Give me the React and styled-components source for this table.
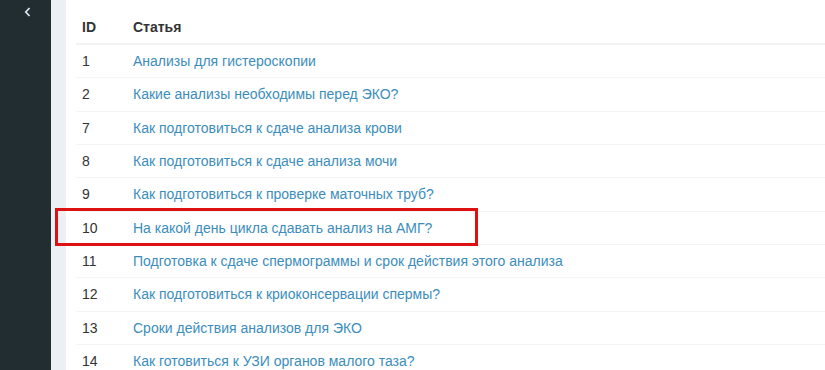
import React from 'react';
import styled, { createGlobalStyle } from 'styled-components';

const GlobalStyle = createGlobalStyle`
  html, body {
    margin: 0;
    padding: 0;
    background: #ffffff;
  }
  body {
    font-family: "Liberation Sans", Arial, sans-serif;
    font-size: 14px;
    color: #333;
  }
`;

const Layout = styled.div`
  display: flex;
  height: 370px;
  overflow: hidden;
`;

const Sidebar = styled.aside`
  width: 51px;
  flex-shrink: 0;
  background: #222d32;
  display: flex;
  justify-content: flex-end;
  padding: 7px 20px 0 0;
  box-sizing: border-box;

  svg {
    display: block;
  }
`;

const Gutter = styled.div`
  width: 15px;
  flex-shrink: 0;
  background: #ecf0f5;
`;

const Main = styled.main`
  flex: 1;
  background: #ffffff;
  padding: 11px 0 0 10px;
  position: relative;
`;

const Table = styled.div`
  display: flex;
  flex-direction: column;
`;

const Row = styled.div`
  display: grid;
  grid-template-columns: 51px 1fr;
  align-items: center;
  height: 33.333px;
  box-sizing: border-box;
  border-bottom: 1px solid #f4f4f4;
  position: relative;
`;

const HeadRow = styled(Row)`
  height: 34px;
  border-bottom: 2px solid #f4f4f4;
  font-weight: bold;
`;

const Cell = styled.div`
  padding-left: 6px;
  line-height: 20px;
  white-space: nowrap;
`;

const Link = styled.a`
  color: #3c8dbc;
  text-decoration: none;
`;

const Highlight = styled.div`
  position: absolute;
  left: -21px;
  top: -4px;
  width: 423px;
  height: 38px;
  box-sizing: border-box;
  border: 3px solid #dd1111;
  pointer-events: none;
`;

const articles = [
  { id: 1, title: 'Анализы для гистероскопии' },
  { id: 2, title: 'Какие анализы необходимы перед ЭКО?' },
  { id: 7, title: 'Как подготовиться к сдаче анализа крови' },
  { id: 8, title: 'Как подготовиться к сдаче анализа мочи' },
  { id: 9, title: 'Как подготовиться к проверке маточных труб?' },
  { id: 10, title: 'На какой день цикла сдавать анализ на АМГ?', marked: true },
  { id: 11, title: 'Подготовка к сдаче спермограммы и срок действия этого анализа' },
  { id: 12, title: 'Как подготовиться к криоконсервации спермы?' },
  { id: 13, title: 'Сроки действия анализов для ЭКО' },
  { id: 14, title: 'Как готовиться к УЗИ органов малого таза?' },
];

const App = () => {
  return (
    <>
      <GlobalStyle />
      <Layout>
        <Sidebar>
          <svg width="7" height="10" viewBox="0 0 7 10">
            <path d="M5.5 1 L1.8 5 L5.5 9" fill="none" stroke="#d6e4ee" strokeWidth="1.8" />
          </svg>
        </Sidebar>
        <Gutter />
        <Main>
          <Table>
            <HeadRow>
              <Cell>ID</Cell>
              <Cell>Статья</Cell>
            </HeadRow>
            {articles.map((a) => (
              <Row key={a.id}>
                <Cell>{a.id}</Cell>
                <Cell>
                  <Link href="#">{a.title}</Link>
                </Cell>
                {a.marked && <Highlight />}
              </Row>
            ))}
          </Table>
        </Main>
      </Layout>
    </>
  );
};

export default App;
